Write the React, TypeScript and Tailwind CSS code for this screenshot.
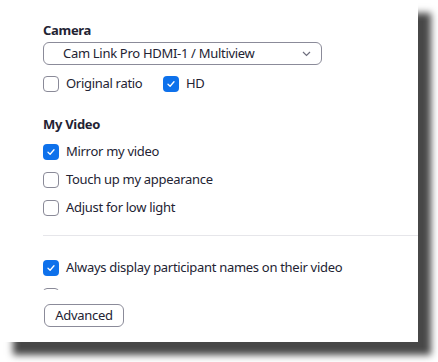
import React from 'react';

function Box({ checked }: { checked?: boolean }) {
  if (checked) {
    return (
      <span className="flex h-4 w-4 shrink-0 items-center justify-center rounded-[4px] bg-[#0e71eb]">
        <svg width="10" height="10" viewBox="0 0 10 10" fill="none">
          <path d="M2 5.2 L4.1 7.2 L8 2.8" stroke="#fff" strokeWidth="1.3" strokeLinecap="round" strokeLinejoin="round" />
        </svg>
      </span>
    );
  }
  return <span className="block h-4 w-4 shrink-0 rounded-[4px] border border-[#8a8a98] bg-white" />;
}

function Check({ label, checked }: { label?: string; checked?: boolean }) {
  return (
    <label className="flex h-4 items-center gap-[7px] text-[13px] tracking-[-0.3px] text-[#232333]">
      <Box checked={checked} />
      {label && <span>{label}</span>}
    </label>
  );
}

export default function App() {
  return (
    <div className="h-[362px] w-[438px] overflow-hidden bg-white" style={{ fontFamily: '"Noto Sans", "Open Sans", sans-serif' }}>
      <div className="flex h-[342px] w-[418px] flex-col bg-white shadow-[13px_13px_7px_rgba(0,0,0,0.72)]">
        {/* Scrollable settings */}
        <div className="h-[290px] overflow-hidden pl-[43px]">
          <div className="mt-[21px] text-[13px] font-bold leading-[18px] tracking-[-0.3px] text-[#232333]">Camera</div>
          <div className="mt-[3px] flex h-[23px] w-[279px] items-center justify-between rounded-[6px] border border-[#8b8b99] pl-[19px] pr-[10px] text-[13px] tracking-[-0.3px] text-[#232333]">
            <span>Cam Link Pro HDMI-1 / Multiview</span>
            <svg width="9" height="6" viewBox="0 0 9 6" fill="none">
              <path d="M1 1 L4.5 4.5 L8 1" stroke="#6e6e7e" strokeWidth="1.2" />
            </svg>
          </div>
          <div className="mt-[11px] flex">
            <div className="w-[120px]">
              <Check label="Original ratio" />
            </div>
            <Check label="HD" checked />
          </div>

          <div className="mt-[23px] text-[13px] font-bold leading-[18px] tracking-[-0.3px] text-[#232333]">My Video</div>
          <div className="mt-[11px] flex flex-col gap-[12px]">
            <Check label="Mirror my video" checked />
            <Check label="Touch up my appearance" />
            <Check label="Adjust for low light" />
          </div>

          <div className="mt-[19px] h-px bg-[#e6e6ea]" />

          <div className="mt-[24px] flex flex-col gap-[12px]">
            <Check label="Always display participant names on their video" checked />
            <Check />
          </div>
        </div>

        <div className="mt-[12px] pl-[44px]">
          <button className="h-[23px] w-[80px] rounded-[6px] border border-[#8b8b99] bg-white text-[13px] tracking-[-0.3px] text-[#232333]">
            Advanced
          </button>
        </div>
      </div>
    </div>
  );
}
